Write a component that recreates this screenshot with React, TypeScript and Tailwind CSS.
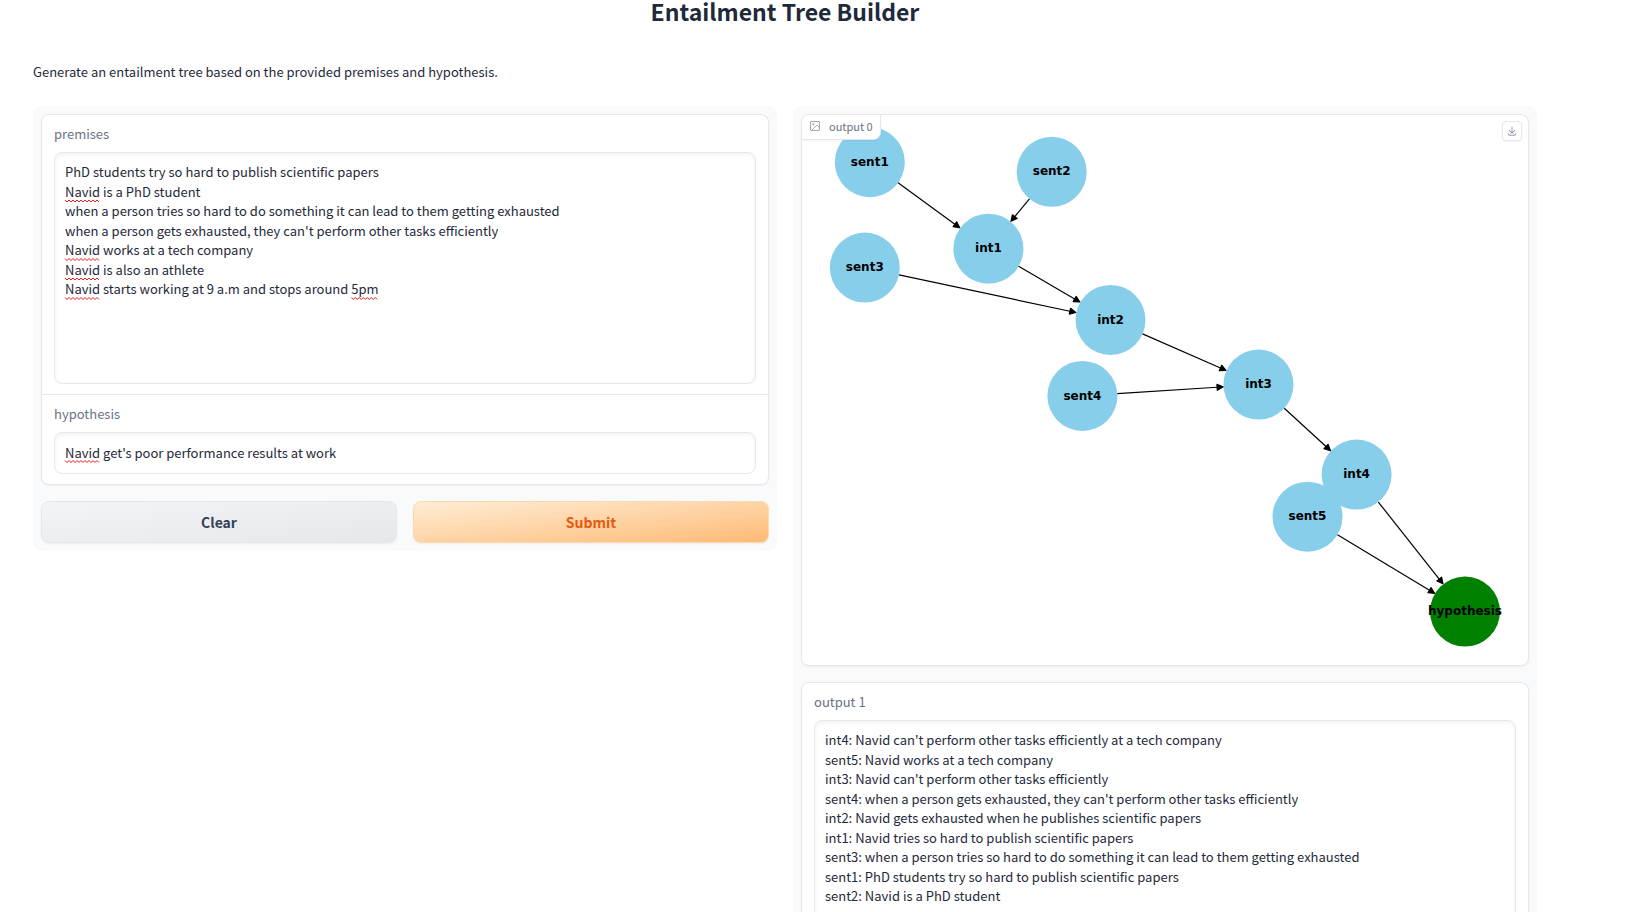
import { useMemo, useState } from "react";

type Point = { id: string; x: number; y: number; color?: string };

const RADIUS = 35;

const nodes: Point[] = [
  { id: "sent1", x: 67.8, y: 47.2 },
  { id: "sent2", x: 249.7, y: 56.8 },
  { id: "int1", x: 186.4, y: 133.7 },
  { id: "sent3", x: 62.8, y: 152.6 },
  { id: "int2", x: 308.5, y: 204.9 },
  { id: "int3", x: 456.5, y: 269.6 },
  { id: "sent4", x: 280.4, y: 280.9 },
  { id: "int4", x: 554.6, y: 359.6 },
  { id: "sent5", x: 505.5, y: 401.7 },
  { id: "hypothesis", x: 663, y: 496.6, color: "#008000" },
];

const edges: [string, string][] = [
  ["sent1", "int1"],
  ["sent2", "int1"],
  ["int1", "int2"],
  ["sent3", "int2"],
  ["int2", "int3"],
  ["sent4", "int3"],
  ["int3", "int4"],
  ["int4", "hypothesis"],
  ["sent5", "hypothesis"],
];

function Edge({ from, to }: { from: Point; to: Point }) {
  const dx = to.x - from.x;
  const dy = to.y - from.y;
  const len = Math.hypot(dx, dy);
  const ux = dx / len;
  const uy = dy / len;
  const tipX = to.x - ux * (RADIUS + 0.5);
  const tipY = to.y - uy * (RADIUS + 0.5);
  const baseX = tipX - ux * 6;
  const baseY = tipY - uy * 6;
  const head = [
    [tipX, tipY],
    [baseX - uy * 3, baseY + ux * 3],
    [baseX + uy * 3, baseY - ux * 3],
  ];
  return (
    <g stroke="#000" strokeWidth="1.2" strokeLinejoin="round">
      <line x1={from.x + ux * RADIUS} y1={from.y + uy * RADIUS} x2={baseX} y2={baseY} />
      <polygon points={head.map((p) => p.join(",")).join(" ")} />
    </g>
  );
}

function TreeGraph() {
  const find = (id: string) => nodes.find((n) => n.id === id)!;
  return (
    <svg viewBox="0 0 726 550" className="block h-auto w-full" role="img" aria-label="Entailment tree">
      {nodes.map((n) => (
        <circle key={n.id} cx={n.x} cy={n.y} r={RADIUS} fill={n.color ?? "#87ceeb"} />
      ))}
      {edges.map(([a, b]) => (
        <Edge key={a + b} from={find(a)} to={find(b)} />
      ))}
      {nodes.map((n) => (
        <text
          key={n.id}
          x={n.x}
          y={n.y + 3.6}
          textAnchor="middle"
          className="fill-black font-['DejaVu_Sans',sans-serif] text-[12px] font-bold"
        >
          {n.id}
        </text>
      ))}
    </svg>
  );
}

const FIELD_FONT = '13px "Noto Sans CJK SC", sans-serif';
const FIELD_INSET = 11;
const LINE_HEIGHT = 19.5;

type Mark = { x: number; y: number; width: number };

function findMarks(text: string): Mark[] {
  const ctx = document.createElement("canvas").getContext("2d");
  if (!ctx) return [];
  ctx.font = FIELD_FONT;
  return text.split("\n").flatMap((line, row) =>
    [...line.matchAll(/Navid|5pm/g)].map((m) => ({
      x: FIELD_INSET + ctx.measureText(line.slice(0, m.index)).width,
      y: FIELD_INSET - 1 + LINE_HEIGHT * (row + 1),
      width: ctx.measureText(m[0]).width,
    })),
  );
}

function squiggle({ x, y, width }: Mark) {
  let d = `M${x} ${y - 1}`;
  for (let i = 1; i * 2 <= width; i++) d += `L${x + i * 2} ${i % 2 ? y + 1 : y - 1}`;
  return d;
}

function SpellMarks({ text }: { text: string }) {
  const marks = useMemo(() => findMarks(text), [text]);
  return (
    <svg aria-hidden="true" className="pointer-events-none absolute inset-0 size-full" fill="none" stroke="#f01818">
      {marks.map((m, i) => (
        <path key={i} d={squiggle(m)} />
      ))}
    </svg>
  );
}

const fieldClass =
  "block w-full resize-none rounded-lg border border-gray-200 bg-white px-[10px] pt-[9px] pb-[10px] text-[13px] leading-normal text-gray-800 shadow-[inset_0_2px_4px_0_rgb(0_0_0/0.05)] outline-none";
const labelClass = "mb-[9px] block text-[13px] leading-[18px] text-gray-500";
const cardClass = "overflow-hidden rounded-lg border border-gray-200 bg-white shadow-[0_1px_2px_0_rgb(0_0_0/0.05)]";
const buttonClass =
  "h-[42px] flex-1 rounded-lg border bg-linear-to-br text-[14px] font-semibold shadow-[0_1px_2px_0_rgb(0_0_0/0.05)]";

const initialPremises = `PhD students try so hard to publish scientific papers
Navid is a PhD student
when a person tries so hard to do something it can lead to them getting exhausted
when a person gets exhausted, they can't perform other tasks efficiently
Navid works at a tech company
Navid is also an athlete
Navid starts working at 9 a.m and stops around 5pm`;

const outputText = `int4: Navid can't perform other tasks efficiently at a tech company
sent5: Navid works at a tech company
int3: Navid can't perform other tasks efficiently
sent4: when a person gets exhausted, they can't perform other tasks efficiently
int2: Navid gets exhausted when he publishes scientific papers
int1: Navid tries so hard to publish scientific papers
sent3: when a person tries so hard to do something it can lead to them getting exhausted
sent1: PhD students try so hard to publish scientific papers
sent2: Navid is a PhD student`;

export default function App() {
  const [premises, setPremises] = useState(initialPremises);
  const [hypothesis, setHypothesis] = useState("Navid get's poor performance results at work");

  return (
    <main className="bg-white pr-[95px] pl-[33px] font-['Noto_Sans_CJK_SC',sans-serif] text-gray-800">
      <h1 className="text-center text-[23px] leading-[22px] font-semibold">Entailment Tree Builder</h1>
      <p className="mt-10 mb-6 text-[13px] leading-5">
        Generate an entailment tree based on the provided premises and hypothesis.
      </p>

      <div className="flex items-start gap-4">
        <section className="flex min-w-0 flex-1 flex-col gap-4 rounded-lg bg-gray-50 p-2">
          <div className={cardClass}>
            <div className="border-b border-gray-200 px-3 py-[10px]">
              <label htmlFor="premises" className={labelClass}>
                premises
              </label>
              <div className="relative">
                <textarea
                  id="premises"
                  spellCheck={false}
                  value={premises}
                  onChange={(e) => setPremises(e.target.value)}
                  className={`${fieldClass} h-[232px]`}
                />
                <SpellMarks text={premises} />
              </div>
            </div>
            <div className="px-3 py-[10px]">
              <label htmlFor="hypothesis" className={labelClass}>
                hypothesis
              </label>
              <div className="relative">
                <input
                  id="hypothesis"
                  type="text"
                  spellCheck={false}
                  value={hypothesis}
                  onChange={(e) => setHypothesis(e.target.value)}
                  className={`${fieldClass} h-[42px]`}
                />
                <SpellMarks text={hypothesis} />
              </div>
            </div>
          </div>
          <div className="flex gap-4">
            <button
              type="button"
              onClick={() => {
                setPremises("");
                setHypothesis("");
              }}
              className={`${buttonClass} border-gray-200 from-gray-100 to-gray-200 text-gray-700`}
            >
              Clear
            </button>
            <button
              type="button"
              className={`${buttonClass} border-[#fed7aa] from-[#ffedd5] to-[#fdba74] text-[#ea580c]`}
            >
              Submit
            </button>
          </div>
        </section>

        <section className="flex min-w-0 flex-1 flex-col gap-4 rounded-lg bg-gray-50 p-2">
          <div className={`${cardClass} relative`}>
            <div className="absolute top-0 left-0 flex h-[25px] items-center gap-2 rounded-br-lg border-r border-b border-gray-200 bg-white pr-[7px] pb-[2px] pl-[7px] text-[11px] leading-4 text-gray-500 shadow-[0_1px_2px_0_rgb(0_0_0/0.05)]">
              <svg viewBox="0 0 24 24" className="size-3 opacity-80" fill="none" stroke="currentColor" strokeWidth="1.5">
                <rect x="3" y="3" width="18" height="18" rx="1" />
                <circle cx="8.5" cy="8.5" r="1.5" />
                <path d="M21 15l-5-5L5 21" />
              </svg>
              output 0
            </div>
            <button
              type="button"
              aria-label="Download"
              className="absolute top-[6px] right-[6px] flex size-5 items-center justify-center rounded-sm border border-gray-200 bg-white text-gray-500 shadow-[0_1px_2px_0_rgb(0_0_0/0.05)]"
            >
              <svg viewBox="0 0 32 32" className="size-[10px]" fill="currentColor">
                <path d="M26 24v4H6v-4H4v4a2 2 0 0 0 2 2h20a2 2 0 0 0 2-2v-4zm0-10l-1.41-1.41L17 20.17V2h-2v18.17l-7.59-7.58L6 14l10 10l10-10z" />
              </svg>
            </button>
            <TreeGraph />
          </div>
          <div className={`${cardClass} px-3 py-[10px]`}>
            <label htmlFor="output" className={labelClass}>
              output 1
            </label>
            <textarea id="output" readOnly spellCheck={false} value={outputText} className={`${fieldClass} h-[232px]`} />
          </div>
        </section>
      </div>
    </main>
  );
}
